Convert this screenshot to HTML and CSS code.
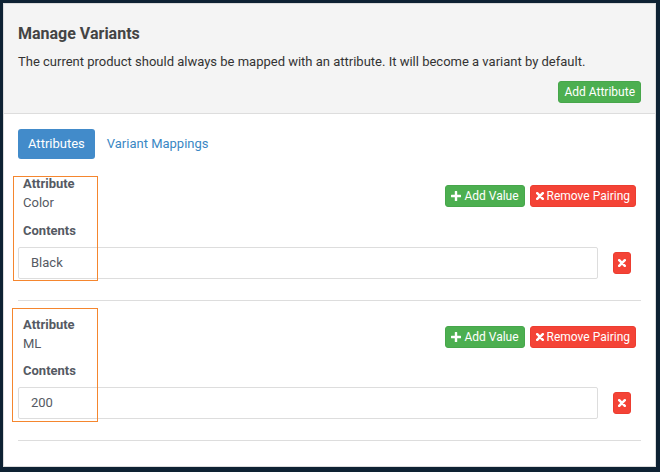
FILE: index.html
```html
<!DOCTYPE html>
<html lang="en">
<head>
<meta charset="utf-8">
<title>Manage Variants</title>
<link rel="stylesheet" href="styles.css">
</head>
<body>
<div class="frame">
  <div class="box-header">
    <h3 class="title">Manage Variants</h3>
    <p class="desc">The current product should always be mapped with an attribute. It will become a variant by default.</p>
    <div class="header-actions"><button class="btn btn-success">Add Attribute</button></div>
  </div>
  <div class="box-body">
    <ul class="tabs">
      <li class="active"><a>Attributes</a></li>
      <li><a>Variant Mappings</a></li>
    </ul>

    <div class="pair pair-1">
      <div class="hl"></div>
      <div class="pair-head">
        <div class="labels">
          <div class="lbl">Attribute</div>
          <div class="val">Color</div>
        </div>
        <div class="actions">
          <button class="btn btn-success"><svg class="ic-plus" viewBox="0 0 10 10"><path d="M3.8 0.5Q3.8 0 4.3 0H5.7Q6.2 0 6.2 0.5V3.8H9.5Q10 3.8 10 4.3V5.7Q10 6.2 9.5 6.2H6.2V9.5Q6.2 10 5.7 10H4.3Q3.8 10 3.8 9.5V6.2H0.5Q0 6.2 0 5.7V4.3Q0 3.8 0.5 3.8H3.8Z"/></svg>Add Value</button>
          <button class="btn btn-danger"><svg class="ic-x" viewBox="0 0 8 8"><path d="M1.2 1.2L6.8 6.8M6.8 1.2L1.2 6.8"/></svg>Remove Pairing</button>
        </div>
      </div>
      <div class="lbl contents">Contents</div>
      <div class="value-row">
        <div class="input">Black</div>
        <button class="btn btn-danger btn-del"><svg class="ic-x" viewBox="0 0 8 8"><path d="M1.2 1.2L6.8 6.8M6.8 1.2L1.2 6.8"/></svg></button>
      </div>
    </div>

    <div class="pair pair-2">
      <div class="hl"></div>
      <div class="pair-head">
        <div class="labels">
          <div class="lbl">Attribute</div>
          <div class="val">ML</div>
        </div>
        <div class="actions">
          <button class="btn btn-success"><svg class="ic-plus" viewBox="0 0 10 10"><path d="M3.8 0.5Q3.8 0 4.3 0H5.7Q6.2 0 6.2 0.5V3.8H9.5Q10 3.8 10 4.3V5.7Q10 6.2 9.5 6.2H6.2V9.5Q6.2 10 5.7 10H4.3Q3.8 10 3.8 9.5V6.2H0.5Q0 6.2 0 5.7V4.3Q0 3.8 0.5 3.8H3.8Z"/></svg>Add Value</button>
          <button class="btn btn-danger"><svg class="ic-x" viewBox="0 0 8 8"><path d="M1.2 1.2L6.8 6.8M6.8 1.2L1.2 6.8"/></svg>Remove Pairing</button>
        </div>
      </div>
      <div class="lbl contents">Contents</div>
      <div class="value-row">
        <div class="input">200</div>
        <button class="btn btn-danger btn-del"><svg class="ic-x" viewBox="0 0 8 8"><path d="M1.2 1.2L6.8 6.8M6.8 1.2L1.2 6.8"/></svg></button>
      </div>
    </div>
  </div>
</div>
</body>
</html>
```

FILE: styles.css
```css
* { box-sizing: border-box; }

body {
  margin: 0;
  background: #0e2233;
  font-family: Roboto, "Liberation Sans", sans-serif;
}

.frame {
  margin: 3px 4px 5px 3px;
  height: 464px;
  background: #fff;
  border: 1px solid #dcdcdc;
}

.box-header {
  background: #f4f4f4;
  border-bottom: 1px solid #ddd;
  padding: 20px 14px 10px;
}

.title {
  margin: 0;
  font-size: 16px;
  line-height: 20px;
  font-weight: 700;
  color: #444;
}

.desc {
  margin: 8px 0 0;
  font-size: 13px;
  line-height: 20px;
  color: #333;
}

.header-actions {
  display: flex;
  justify-content: flex-end;
  margin-top: 9px;
}

.btn {
  display: inline-flex;
  align-items: center;
  gap: 3px;
  border: 1px solid transparent;
  border-radius: 3px;
  padding: 1px 5px;
  font-family: Roboto, "Liberation Sans", sans-serif;
  font-size: 12px;
  line-height: 18px;
  color: #fff;
  cursor: pointer;
}

.btn-success { background: #4caf50; border-color: #47a64b; }
.btn-danger { background: #f44336; border-color: #ec3d30; }

.ic-plus { width: 10px; height: 10px; fill: #fff; }
.ic-x { width: 8px; height: 8px; fill: none; stroke: #fff; stroke-width: 2.5; stroke-linecap: round; }

.box-body { padding: 15px 14px 0; }

.tabs {
  list-style: none;
  margin: 0;
  padding: 0;
  display: flex;
  gap: 2px;
}

.tabs a {
  display: block;
  height: 30px;
  padding: 0 10px;
  line-height: 30px;
  font-size: 13px;
  color: #3a87c4;
  border-radius: 3px;
}

.tabs .active a { background: #428bca; color: #fff; }

.pair {
  position: relative;
  margin-top: 15px;
  padding-bottom: 21px;
  border-bottom: 1px solid #ddd;
}

.pair + .pair { margin-top: 14px; }

.pair-head {
  display: flex;
  justify-content: space-between;
  align-items: flex-start;
}

.labels { padding-left: 5px; }

.lbl {
  font-size: 13px;
  line-height: 19px;
  font-weight: 700;
  color: #555a63;
}

.val {
  font-size: 13px;
  line-height: 19px;
  color: #555a63;
}

.actions {
  display: flex;
  gap: 5px;
  margin-top: 11px;
  margin-right: 5px;
}

.contents { margin-top: 9px; padding-left: 5px; }
.pair-2 .contents { margin-top: 8px; }

.value-row {
  display: flex;
  align-items: center;
  margin-top: 7px;
}

.input {
  flex: 1;
  height: 32px;
  border: 1px solid #ddd;
  border-radius: 2px;
  padding: 0 12px;
  line-height: 30px;
  font-size: 13px;
  color: #555a63;
}

.btn-del {
  margin-left: 15px;
  margin-right: 10px;
  padding: 1px 4px;
  height: 22px;
}

.hl {
  position: absolute;
  border: 1px solid #f5862e;
  pointer-events: none;
}

.pair-1 .hl { left: -5px; top: 2px; width: 85px; height: 105px; }
.pair-2 .hl { left: -6px; top: -7px; width: 86px; height: 114px; }
```
